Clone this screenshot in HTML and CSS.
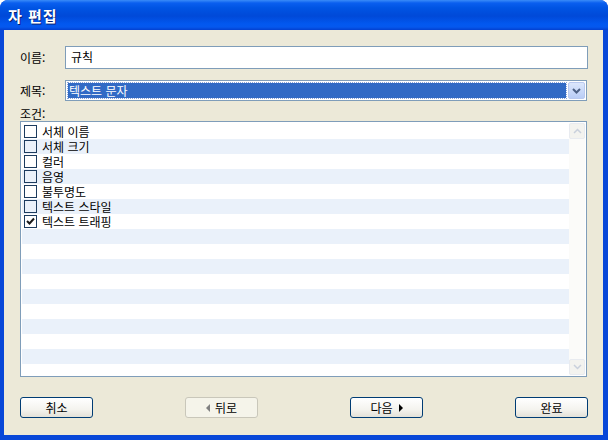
FILE: index.html
```html
<!DOCTYPE html>
<html lang="ko">
<head>
<meta charset="utf-8">
<link rel="stylesheet" href="styles.css">
</head>
<body>
<div class="window">
  <div class="titlebar"><span class="title">자 편집</span></div>
  <div class="frame">
    <div class="content">
      <div class="field">
        <label class="label">이름:</label>
        <div class="textbox">규칙</div>
      </div>
      <div class="field field-select">
        <label class="label">제목:</label>
        <div class="select">
          <div class="select-value"><span class="sel">텍스트 문자</span></div>
          <div class="select-btn">
            <svg width="9" height="6" viewBox="0 0 9 6"><path d="M1 1 L4.5 4.5 L8 1" fill="none" stroke="#4d6185" stroke-width="2"/></svg>
          </div>
        </div>
      </div>
      <div class="cond-label">조건:</div>
      <div class="listbox">
        <div class="rows">
          <div class="row"><span class="cb"></span><span class="txt">서체 이름</span></div>
          <div class="row alt"><span class="cb"></span><span class="txt">서체 크기</span></div>
          <div class="row"><span class="cb"></span><span class="txt">컬러</span></div>
          <div class="row alt"><span class="cb"></span><span class="txt">음영</span></div>
          <div class="row"><span class="cb"></span><span class="txt">불투명도</span></div>
          <div class="row alt"><span class="cb"></span><span class="txt">텍스트 스타일</span></div>
          <div class="row"><span class="cb"><svg width="9" height="9" viewBox="0 0 9 9"><path d="M1 4 L3.5 6.5 L8 1.5" fill="none" stroke="#1a1a1a" stroke-width="2"/></svg></span><span class="txt">텍스트 트래핑</span></div>
          <div class="row alt"></div>
          <div class="row"></div>
          <div class="row alt"></div>
          <div class="row"></div>
          <div class="row alt"></div>
          <div class="row"></div>
          <div class="row alt"></div>
          <div class="row"></div>
          <div class="row alt"></div>
          <div class="row"></div>
        </div>
        <div class="scrollbar">
          <div class="sb-btn">
            <svg width="9" height="6" viewBox="0 0 9 6"><path d="M1 5 L4.5 1.5 L8 5" fill="none" stroke="#c9d0dc" stroke-width="1.5"/></svg>
          </div>
          <div class="sb-track"></div>
          <div class="sb-btn">
            <svg width="9" height="6" viewBox="0 0 9 6"><path d="M1 1 L4.5 4.5 L8 1" fill="none" stroke="#c9d0dc" stroke-width="1.5"/></svg>
          </div>
        </div>
      </div>
      <div class="buttons">
        <button class="btn">취소</button>
        <button class="btn disabled"><span class="arrow-l"></span>뒤로</button>
        <button class="btn">다음<span class="arrow-r"></span></button>
        <button class="btn">완료</button>
      </div>
    </div>
  </div>
</div>
</body>
</html>
```
FILE: styles.css
```css
* { box-sizing: border-box; }
html, body { margin: 0; padding: 0; }
body {
  width: 608px;
  height: 440px;
  background: #ffffff;
  font-family: "Noto Sans CJK KR", "Noto Sans", sans-serif;
  font-size: 12px;
  color: #000;
  overflow: hidden;
}
.window {
  width: 608px;
  height: 440px;
  display: flex;
  flex-direction: column;
  background: #0842d8;
  border-radius: 8px 8px 0 0;
  overflow: hidden;
}
.titlebar {
  height: 30px;
  flex: none;
  background: linear-gradient(#3a8cf8 0px, #0a5fef 3px, #0054e3 8px, #0049d8 16px, #0258f0 24px, #0558ee 27px, #0340d0 30px);
  display: flex;
  align-items: center;
  padding-left: 8px;
}
.title {
  color: #fff;
  font-weight: bold;
  font-size: 15px;
  letter-spacing: 1px;
  text-shadow: 1px 1px 0 #0a1e6e;
  line-height: 1;
  margin-top: 1px;
}
.frame {
  flex: 1;
  padding: 0 5px 5px 4px;
  background: #0847d8;
  display: flex;
}
.content {
  flex: 1;
  background: #ece9d8;
  padding: 16px 15px 17px 16px;
  display: flex;
  flex-direction: column;
}
.field {
  display: flex;
  align-items: center;
  height: 23px;
}
.field-select {
  margin-top: 11px;
  height: 21px;
}
.label {
  width: 45px;
  flex: none;
  color: #000;
}
.textbox {
  flex: 1;
  height: 23px;
  border: 1px solid #7f9db9;
  background: #fff;
  padding: 0 5px;
  line-height: 20px;
}
.select {
  flex: 1;
  height: 21px;
  border: 1px solid #7f9db9;
  background: #fff;
  display: flex;
  margin-right: 1px;
}
.select-value {
  flex: 1;
  padding: 2px 1px 2px 2px;
}
.sel {
  display: block;
  height: 15px;
  background: #316ac5;
  color: #fff;
  line-height: 15px;
  padding-left: 1px;
  outline: 1px dotted #8aa4d8;
  overflow: hidden;
}
.select-btn {
  width: 17px;
  margin: 1px;
  border: 1px solid #b9c9ef;
  border-radius: 2px;
  background: linear-gradient(#dce7fc, #b9cdf6);
  display: flex;
  align-items: center;
  justify-content: center;
}
.cond-label {
  margin-top: 5px;
  height: 15px;
  line-height: 15px;
}
.listbox {
  height: 256px;
  margin-right: 1px;
  border: 1px solid #7f9db9;
  background: #fff;
  display: flex;
  padding: 1px;
}
.rows {
  flex: 1;
  padding-top: 1px;
  overflow: hidden;
}
.row {
  height: 15px;
  display: flex;
  align-items: center;
  padding-left: 2px;
  background: #fff;
}
.row.alt { background: #eaf1fa; }
.txt {
  display: block;
  height: 15px;
  line-height: 15px;
  overflow: hidden;
}
.cb {
  width: 13px;
  height: 13px;
  border: 1px solid #1c3b5e;
  background: #fff;
  margin-right: 5px;
  flex: none;
  display: flex;
  align-items: center;
  justify-content: center;
}
.row.alt .cb { background: #eaf1fa; }
.scrollbar {
  width: 16px;
  flex: none;
  display: flex;
  flex-direction: column;
  background: #fbfbf9;
}
.sb-btn {
  height: 16px;
  border: 1px solid #e8ebf0;
  border-radius: 2px;
  background: #f3f3ef;
  display: flex;
  align-items: center;
  justify-content: center;
}
.sb-track { flex: 1; }
.buttons {
  margin-top: auto;
  display: flex;
  justify-content: space-between;
}
.btn {
  width: 73px;
  height: 21px;
  border: 1px solid #003c74;
  border-radius: 3px;
  background: linear-gradient(#ffffff, #f4f3ee 60%, #e3e1d8);
  font-family: "Noto Sans CJK KR", "Noto Sans", sans-serif;
  font-size: 12px;
  color: #000;
  padding: 0;
  display: flex;
  align-items: center;
  justify-content: center;
  line-height: 1;
}
.btn.disabled {
  border-color: #c9c7ba;
  background: #f5f4ea;
  color: #000;
}
.arrow-l {
  width: 0; height: 0;
  border-top: 4px solid transparent;
  border-bottom: 4px solid transparent;
  border-right: 4px solid #808080;
  margin-right: 5px;
}
.arrow-r {
  width: 0; height: 0;
  border-top: 4px solid transparent;
  border-bottom: 4px solid transparent;
  border-left: 4px solid #000;
  margin-left: 6px;
}
```
